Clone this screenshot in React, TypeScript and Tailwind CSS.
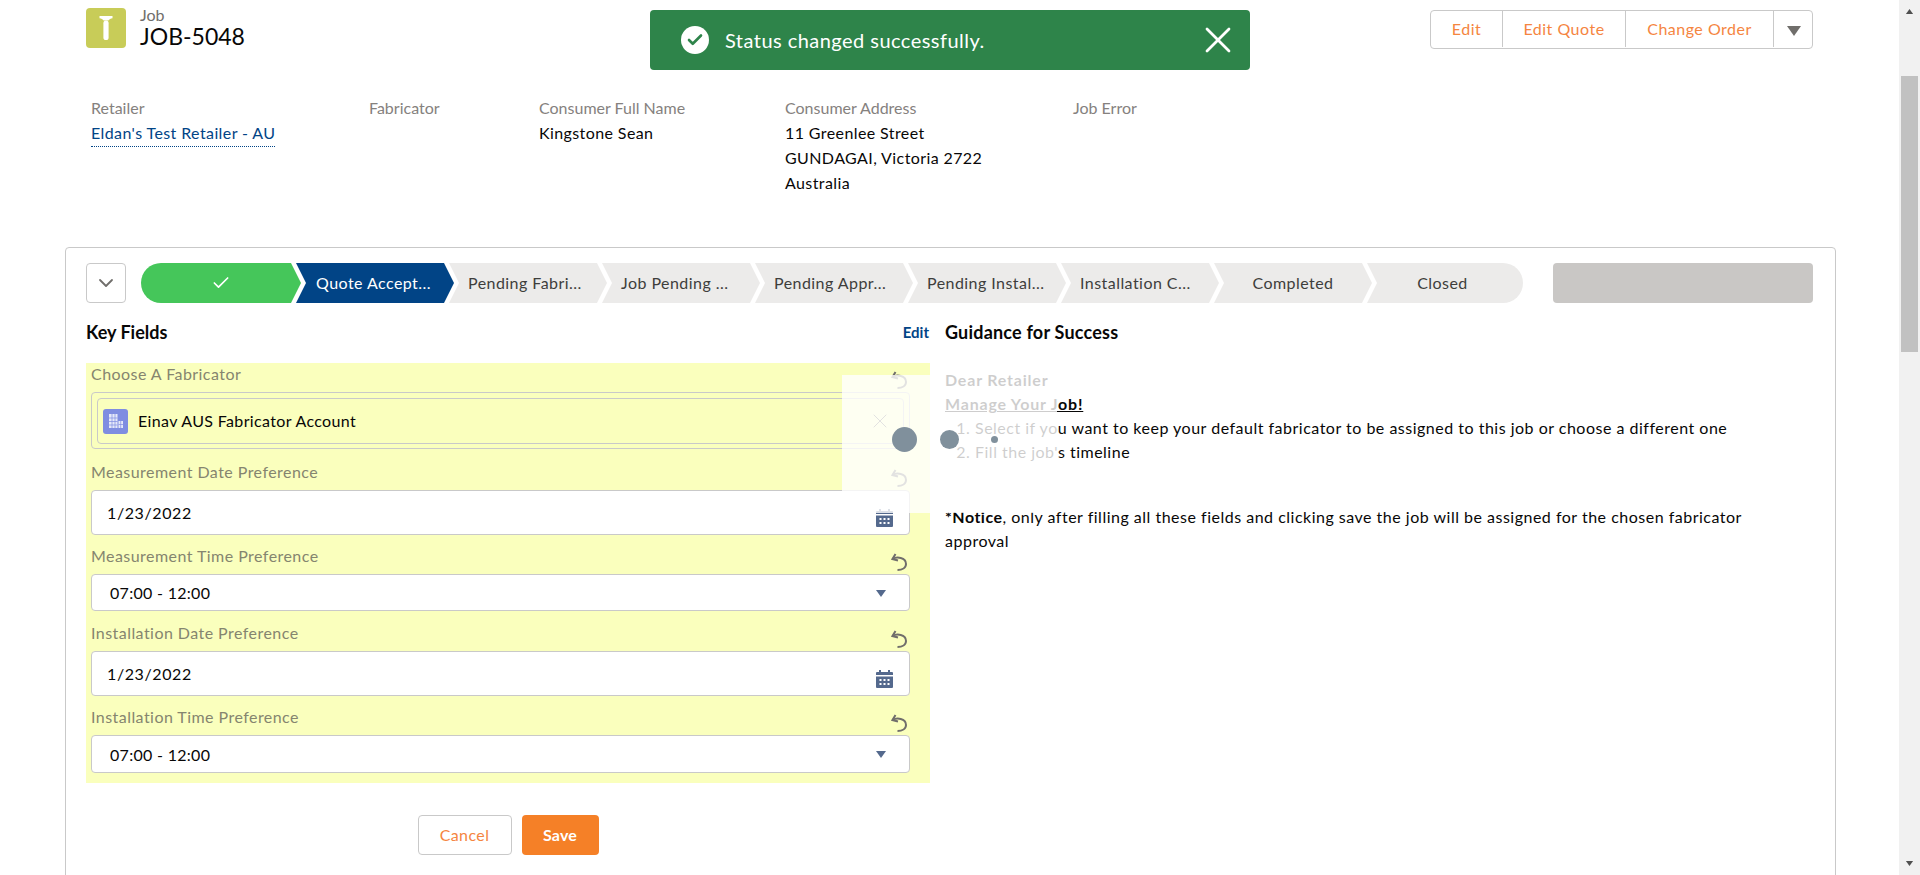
import { Check, ChevronDown, X } from "lucide-react";

const stages = [
  { name: "Pending Fabri...", cut: true },
  { name: "Job Pending ...", cut: true },
  { name: "Pending Appr...", cut: true },
  { name: "Pending Instal...", cut: true },
  { name: "Installation C...", cut: true },
  { name: "Completed", cut: false },
];

const details = [
  { label: "Retailer", width: "w-[278px]" },
  { label: "Fabricator", width: "w-[170px]" },
  { label: "Consumer Full Name", width: "w-[246px]" },
  { label: "Consumer Address", width: "w-[288px]" },
  { label: "Job Error", width: "w-[200px]" },
];

function UndoIcon() {
  return (
    <svg viewBox="0 0 16 18" className="h-[18px] w-4 text-[#706e6b]" fill="none" stroke="currentColor" strokeWidth="2">
      <path d="M4.5 1 1.5 6l5.5 1.5" />
      <path d="M1.5 6c4-2.5 13.5-2 13.5 5 0 4-4 6-8.500 6" />
    </svg>
  );
}

function CalendarIcon() {
  return (
    <svg viewBox="0 0 17 18" className="h-[18px] w-[17px] text-[#54698d]">
      <path fill="currentColor" d="M3 0h2v2h7V0h2v2h2a1 1 0 0 1 1 1v2H0V3a1 1 0 0 1 1-1h2zM0 6.500h17V17a1 1 0 0 1-1 1H1a1 1 0 0 1-1-1z" />
      <path fill="#fff" d="M3.500 9h2v2h-2zM7.500 9h2v2h-2zM11.500 9h2v2h-2zM3.500 13h2v2h-2zM7.500 13h2v2h-2zM11.500 13h2v2h-2z" />
    </svg>
  );
}

function Caret({ className }: { className: string }) {
  return (
    <svg viewBox="0 0 10 7" className={className}>
      <path fill="currentColor" d="M0 0h10L5 7z" />
    </svg>
  );
}

function LabelRow({ text, height }: { text: string; height: string }) {
  return (
    <div className={`flex items-end justify-between pr-[23px] pb-[3px] pl-[5px] ${height}`}>
      <span className="mb-[5px] text-base leading-5 tracking-[0.45px] text-[#85856f]">{text}</span>
      <UndoIcon />
    </div>
  );
}

function DateInput() {
  return (
    <div className="mr-5 ml-[5px] flex h-[45px] items-center justify-between rounded border border-[#c9c9c9] bg-white pr-4 pl-[15px] text-base tracking-[0.6px] text-[#080707]">
      <span>1/23/2022</span>
      <span className="pt-[10px]">
        <CalendarIcon />
      </span>
    </div>
  );
}

function TimeSelect({ height }: { height: string }) {
  return (
    <div className={`mr-5 ml-[5px] flex items-center justify-between rounded border border-[#c9c9c9] bg-white pt-[1px] pr-[23px] pl-[18px] text-base tracking-[0.3px] text-[#080707] ${height}`}>
      <span>07:00 - 12:00</span>
      <Caret className="h-[7px] w-[10px] text-[#54698d]" />
    </div>
  );
}

export default function App() {
  return (
    <div className="relative flex h-[875px] overflow-hidden bg-white font-['Lato',sans-serif] text-[#080707]">
      <div className="w-[1899px] shrink-0">
        <header className="flex h-[98px] items-start justify-between pt-2 pr-[86px] pl-[86px]">
          <div className="flex">
            <div className="flex h-10 w-10 items-center justify-center rounded bg-[#c8cc58]">
              <svg viewBox="0 0 16 28" className="h-[26px] w-4 text-white">
                <path fill="currentColor" d="M1 1h14v2.500c-2 .5-3.500 1-4.500 2.500H5.500C4.500 4.500 3 4 1 3.500z" />
                <rect x="5.200" y="6" width="5.600" height="21" rx="2.800" fill="currentColor" />
              </svg>
            </div>
            <div className="ml-[14px]">
              <p className="-mt-[2px] text-base leading-[17px] text-[#706e6b]">Job</p>
              <p className="text-[23px] leading-[26px] font-normal">JOB-5048</p>
            </div>
          </div>
          <div className="mt-[2px] flex h-[39px] overflow-hidden rounded border border-[#c9c9c9] pb-[1px] text-base tracking-[0.5px] text-[#f5853f]">
            <span className="flex w-[72px] items-center justify-center border-r border-[#c9c9c9]">Edit</span>
            <span className="flex w-[123px] items-center justify-center border-r border-[#c9c9c9]">Edit Quote</span>
            <span className="flex w-[148px] items-center justify-center border-r border-[#c9c9c9]">Change Order</span>
            <span className="flex w-[38px] items-center justify-center pt-1 pl-[2px]">
              <Caret className="h-[10px] w-[14px] text-[#706e6b]" />
            </span>
          </div>
        </header>

        <section className="flex h-[149px] pl-[91px] text-base leading-[25px] tracking-[0.4px]">
          {details.map((d) => (
            <div key={d.label} className={d.width}>
              <p className="h-[22px] leading-5 tracking-normal text-[#85817e]">{d.label}</p>
              {d.label === "Retailer" && (
                <span className="inline-block h-[27px] border-b border-dotted border-[#014486] text-[#014486]">Eldan's Test Retailer - AU</span>
              )}
              {d.label === "Consumer Full Name" && <p>Kingstone Sean</p>}
              {d.label === "Consumer Address" && (
                <>
                  <p>11 Greenlee Street</p>
                  <p>GUNDAGAI, Victoria 2722</p>
                  <p>Australia</p>
                </>
              )}
            </div>
          ))}
        </section>

        <section className="ml-[65px] h-[700px] w-[1771px] rounded-t border border-[#c9c9c9] px-5 pt-[15px]">
          <div className="flex h-10">
            <div className="mr-[15px] flex h-10 w-10 items-center justify-center rounded border border-[#c9c9c9] text-[#706e6b]">
              <ChevronDown size={24} strokeWidth={1.8} />
            </div>
            <div className="flex h-10 w-[1382px] text-base tracking-[0.45px] text-[#3e3e3c]">
              <div className="flex h-10 w-[160px] shrink-0 items-center justify-center rounded-l-full bg-[#45c65a] text-white [clip-path:polygon(0_0,calc(100%-10px)_0,100%_50%,calc(100%-10px)_100%,0_100%)]">
                <Check size={20} strokeWidth={2} />
              </div>
              <div className="-ml-[5px] flex h-10 w-[158px] shrink-0 items-center bg-[#014486] pl-5 text-white [clip-path:polygon(0_0,calc(100%-10px)_0,100%_50%,calc(100%-10px)_100%,0_100%,10px_50%)]">
                Quote Accept...
              </div>
              {stages.map((s) =>
                s.cut ? (
                  <div key={s.name} className="-ml-[5px] flex h-10 w-[158px] shrink-0 items-center bg-[#ecebea] pl-[19px] whitespace-nowrap [clip-path:polygon(0_0,calc(100%-10px)_0,100%_50%,calc(100%-10px)_100%,0_100%,10px_50%)]">
                    {s.name}
                  </div>
                ) : (
                  <div key={s.name} className="-ml-[5px] flex h-10 w-[158px] shrink-0 items-center justify-center bg-[#ecebea] [clip-path:polygon(0_0,calc(100%-10px)_0,100%_50%,calc(100%-10px)_100%,0_100%,10px_50%)]">
                    {s.name}
                  </div>
                ),
              )}
              <div className="-ml-[5px] flex h-10 w-[156px] shrink-0 items-center justify-center rounded-r-full bg-[#ecebea] pr-[5px] [clip-path:polygon(0_0,100%_0,100%_100%,0_100%,10px_50%)]">
                Closed
              </div>
            </div>
            <div className="ml-[30px] h-10 w-[260px] rounded bg-[#c9c7c5]" />
          </div>

          <div className="mt-[17px] flex">
            <div className="w-[844px] shrink-0">
              <div className="mb-[19px] flex h-6 items-center justify-between pr-[1px]">
                <h2 className="text-lg leading-6 font-bold">Key Fields</h2>
                <span className="text-[15px] font-bold text-[#014486]">Edit</span>
              </div>
              <div className="h-[420px] bg-[#faffbd]">
                <LabelRow text="Choose A Fabricator" height="h-[29px]" />
                <div className="mr-5 ml-[5px] h-[57px] rounded border border-[#c9c9c9] p-[5px]">
                  <div className="flex h-[46px] items-center rounded border border-[#c9c9c9] pr-[11px] pl-[5px]">
                    <span className="flex h-[25px] w-[25px] items-center justify-center rounded-[3px] bg-[#7f8de1]">
                      <svg viewBox="0 0 16 16" className="h-4 w-4 text-white/80">
                        <path fill="currentColor" d="M1 1h8.500v14H1zM10.500 8H15v7h-4.500z" />
                        <path stroke="#7f8de1" strokeWidth="0.7" d="M1 5h8.500M1 8.500h8.500M1 12h8.500M4 1v14M7 1v14M10.500 11.500H15M12.700 8v7" />
                      </svg>
                    </span>
                    <span className="ml-[10px] flex-1 text-base tracking-[0.35px]">Einav AUS Fabricator Account</span>
                    <X size={24} strokeWidth={1} className="text-[#706e6b]" />
                  </div>
                </div>
                <LabelRow text="Measurement Date Preference" height="h-[41px]" />
                <DateInput />
                <LabelRow text="Measurement Time Preference" height="h-[39px]" />
                <TimeSelect height="h-[37px]" />
                <LabelRow text="Installation Date Preference" height="h-[40px]" />
                <DateInput />
                <LabelRow text="Installation Time Preference" height="h-[39px]" />
                <TimeSelect height="h-[38px]" />
              </div>
              <div className="mt-8 flex justify-center gap-[10px] text-base tracking-[0.4px]">
                <span className="flex h-10 w-[94px] items-center justify-center rounded border border-[#c9c9c9] text-[#f5853f]">Cancel</span>
                <span className="flex h-10 w-[77px] items-center justify-center rounded bg-[#f58027] font-bold tracking-[0.2px] text-white">Save</span>
              </div>
            </div>

            <div className="ml-[15px] w-[810px] text-base leading-6 tracking-[0.5px]">
              <h2 className="mb-6 h-6 text-lg leading-6 font-bold tracking-[0.2px]">Guidance for Success</h2>
              <p className="font-bold tracking-[0.8px]">Dear Retailer</p>
              <p className="font-bold tracking-[0.8px] underline">Manage Your Job!</p>
              <ol className="list-decimal pl-[30px]">
                <li>Select if you want to keep your default fabricator to be assigned to this job or choose a different one</li>
                <li>Fill the job's timeline</li>
              </ol>
              <p className="mt-[41px]">
                <b>*Notice</b>, only after filling all these fields and clicking save the job will be assigned for the chosen fabricator approval
              </p>
            </div>
          </div>
        </section>
      </div>

      <aside className="flex w-[21px] flex-col items-center bg-[#f1f1f1]">
        <Caret className="mt-[9px] h-[5px] w-[9px] rotate-180 text-[#505050]" />
        <div className="mt-[62px] h-[276px] w-[17px] shrink-0 bg-[#c1c1c1]" />
        <Caret className="mt-auto mb-[9px] h-[5px] w-[9px] text-[#505050]" />
      </aside>

      {/* toast */}
      <div className="absolute top-[10px] left-[650px] flex h-[60px] w-[600px] items-center rounded bg-[#2e844a] pr-[10px] pl-[31px] text-white">
        <span className="flex h-[28px] w-[28px] items-center justify-center rounded-full bg-white text-[#2e844a]">
          <Check size={18} strokeWidth={3.5} />
        </span>
        <span className="ml-[16px] flex-1 pb-[1px] text-[20px] tracking-[0.46px]">Status changed successfully.</span>
        <X size={44} strokeWidth={1.5} />
      </div>

      {/* loading overlay */}
      <div className="absolute top-[375px] left-[842px] h-[138px] w-[215px] bg-white/80" />
      <span className="absolute top-[427px] left-[892px] h-[25px] w-[25px] rounded-full bg-[#80909c]" />
      <span className="absolute top-[430px] left-[940px] h-[19px] w-[19px] rounded-full bg-[#80909c]" />
      <span className="absolute top-[436px] left-[991px] h-[7px] w-[7px] rounded-full bg-[#80909c]" />
    </div>
  );
}
